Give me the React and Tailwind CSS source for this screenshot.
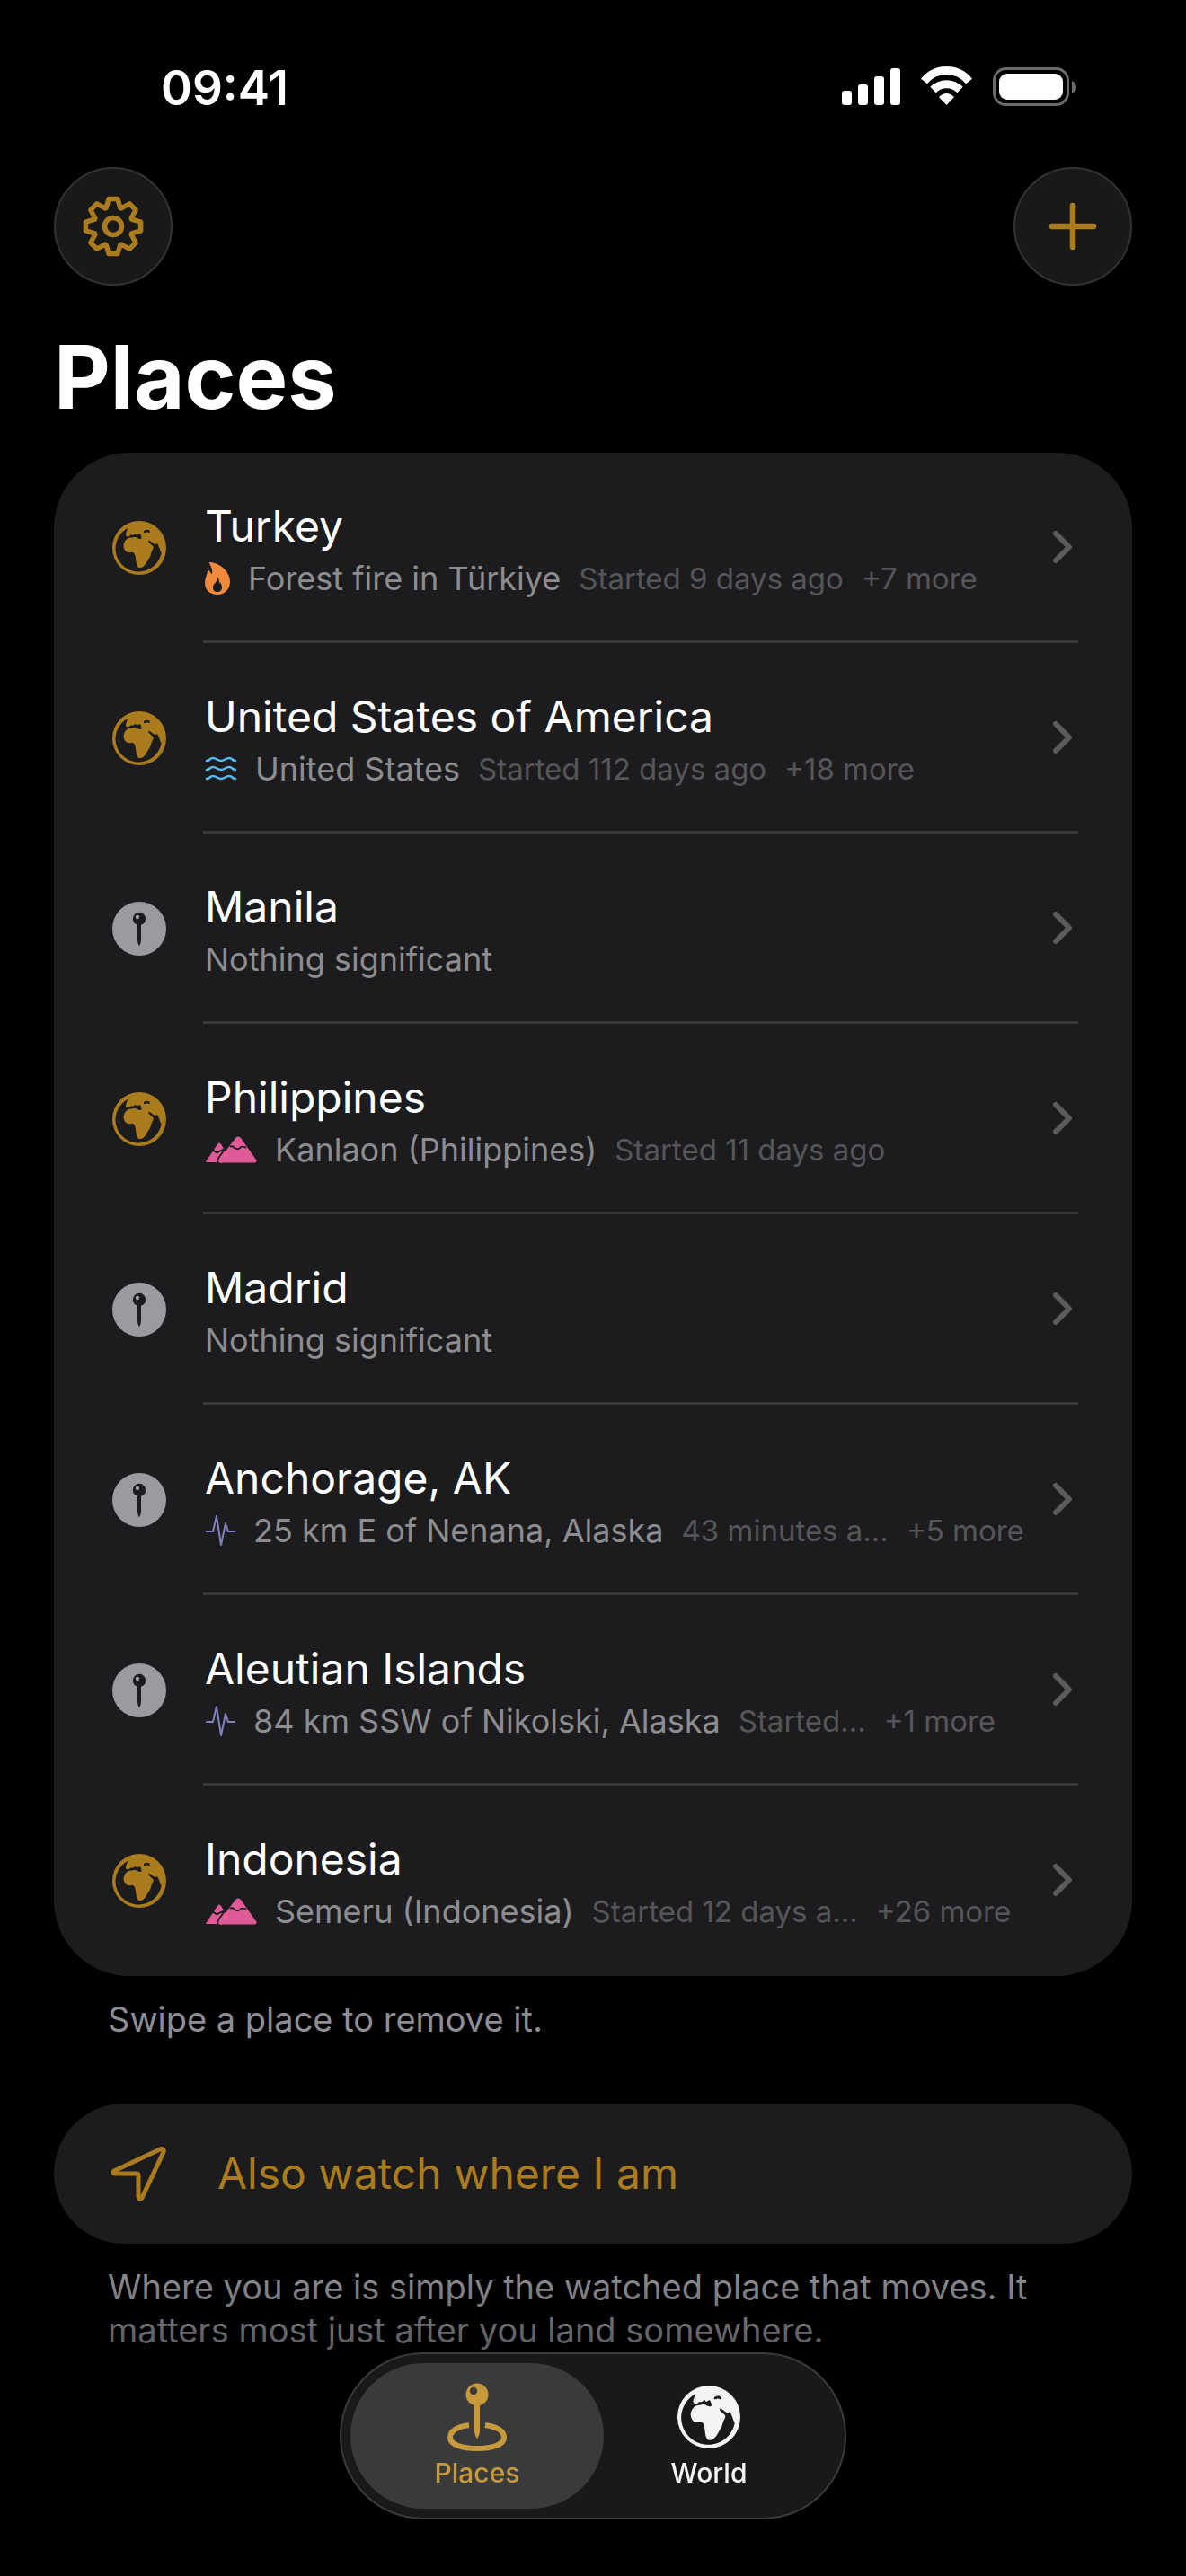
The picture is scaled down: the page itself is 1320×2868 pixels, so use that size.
// src/App.jsx
const PLACES = [
  { name: "Turkey", kind: "country", event: "fire", title: "Forest fire in Türkiye", when: "Started 9 days ago", more: "+7 more" },
  { name: "United States of America", kind: "country", event: "flood", title: "United States", when: "Started 112 days ago", more: "+18 more" },
  { name: "Manila", kind: "city" },
  { name: "Philippines", kind: "country", event: "volcano", title: "Kanlaon (Philippines)", when: "Started 11 days ago" },
  { name: "Madrid", kind: "city" },
  { name: "Anchorage, AK", kind: "city", event: "quake", title: "25 km E of Nenana, Alaska", when: "43 minutes a…", more: "+5 more" },
  { name: "Aleutian Islands", kind: "city", event: "quake", title: "84 km SSW of Nikolski, Alaska", when: "Started…", more: "+1 more" },
  { name: "Indonesia", kind: "country", event: "volcano", title: "Semeru (Indonesia)", when: "Started 12 days a…", more: "+26 more" },
];

// Eight-tooth gear outline around 0,0
function gearPath() {
  const points = [];
  for (let i = 0; i < 8; i++) {
    for (const [radius, offset] of [[22, -21], [31, -9], [31, 9], [22, 21]]) {
      const a = ((i * 45 + offset - 90) * Math.PI) / 180;
      points.push(`${(radius * Math.cos(a)).toFixed(2)} ${(radius * Math.sin(a)).toFixed(2)}`);
    }
  }
  return `M${points.join("L")}Z`;
}

function GearIcon() {
  return (
    <svg className="size-[70px]" viewBox="-35 -35 70 70" fill="none" stroke="currentColor" strokeWidth="5.500" strokeLinejoin="round" aria-hidden="true">
      <path d={gearPath()} />
      <circle r="9.5" />
    </svg>
  );
}

function PlusIcon() {
  return (
    <svg className="size-[54px]" viewBox="0 0 54 54" stroke="currentColor" strokeWidth="6.5" strokeLinecap="round" aria-hidden="true">
      <path d="M27 4V50M4 27H50" />
    </svg>
  );
}

function GlobeIcon({ className }) {
  return (
    <svg className={className} viewBox="0 0 100 100" fill="currentColor" fillRule="evenodd" aria-hidden="true">
      <path
        d="M50 0A50 50 0 1 1 50 100A50 50 0 1 1 50 0Z
        M29 13A43 43 0 1 0 91 60L90 57C88 54 88 50 86 47C85 44 83 41 82 42C81 45 79 44 77 42L70 37C67 35 66 38 68 40L71 43
        C73 46 76 46 76 48C77 51 74 54 73 57C71 62 71 67 67 71C64 77 61 82 57 85C54 87 50 88 47 85C44 80 44 73 43 67C42 62 41 59 37 58
        C32 59 27 59 24 55C21 51 20 45 22 41C24 35 29 31 35 31C41 30 43 29 47 32C50 33 52 34 54 32C55 30 53 27 52 24C50 22 48 25 46 26
        L43 23C41 24 39 27 37 26L34 26C32 29 28 30 26 28C23 25 27 19 29 13Z
        M58 20C59 16 66 15 69 18C71 21 69 23 66 21C63 20 61 22 59 22Z"
      />
    </svg>
  );
}

function CityPinIcon({ className }) {
  return (
    <svg className={className} viewBox="0 0 60 60" aria-hidden="true">
      <circle cx="30" cy="30" r="30" fill="#9a9aa1" />
      <circle cx="30" cy="19" r="7.2" fill="#1c1c1e" />
      <path d="M28 24H32V42Q32 46 30 49.500Q28 46 28 42Z" fill="#1c1c1e" />
      <circle cx="28" cy="17" r="2.200" fill="#9a9aa1" />
    </svg>
  );
}

function EventIcon({ type }) {
  if (type === "fire") {
    return (
      <svg className="w-[28px] h-[36px] shrink-0" viewBox="0 0 28 36" fill="#f08a3c" fillRule="evenodd" aria-hidden="true">
        <path d="M5 1C4 0 5 0 6 0C17 1 28 10 28 22C28 30 22 36 14 36C6 36 0 31 0 23C0 18 2 15 3 10C4 8 5 9 6 11C7 12 7 13 8 13C9 9 7 5 5 1ZM14 17C15 22 9 23 9 28C9 32 11 33 14 33C17 33 19 31 19 28C19 26 18 24 17 22C16 24 16 24 16 24C16 21 16 18 14 17Z" />
      </svg>
    );
  }
  if (type === "flood") {
    return (
      <svg className="w-[36px] h-[28px] shrink-0" viewBox="0 0 36 28" fill="none" stroke="#55b9ee" strokeWidth="2.600" strokeLinecap="round" aria-hidden="true">
        <path d="M2 5C6 5 5 2 9 2S14 5 18 5S23 2 27 2S30 5 34 5M2 15C6 15 5 12 9 12S14 15 18 15S23 12 27 12S30 15 34 15M2 25C6 25 5 22 9 22S14 25 18 25S23 22 27 22S30 25 34 25" />
      </svg>
    );
  }
  if (type === "volcano") {
    return (
      <svg className="w-[58px] h-[30px] shrink-0" viewBox="0 0 58 30" aria-hidden="true">
        <path d="M2 27L14 9Q16 6 18 9L30 29H3Q0 29 2 27Z" fill="#df5b98" />
        <path d="M17 30Q15 28 17 25L34 2Q37 -1 40 2L57 26Q59 29 55 29.500H20Z" fill="#df5b98" />
        <path d="M15 30Q13 27 16 23L24 12M7 17Q9 15 11 17T16 17T22 15M28 12Q30 10 33 13Q37 16 40 12Q44 11 46 13" fill="none" stroke="#1c1c1e" strokeWidth="1.800" />
      </svg>
    );
  }
  return (
    <svg className="w-[34px] h-[34px] shrink-0" viewBox="0 0 34 34" fill="none" stroke="#8380c0" strokeWidth="2" strokeLinecap="round" strokeLinejoin="round" aria-hidden="true">
      <path d="M2 18H9L13 1L18 33L23 9L26 18H33" />
    </svg>
  );
}

function PlaceRow({ place, last }) {
  return (
    <li>
      <button type="button" className="w-full flex items-center gap-9 px-[60px] text-left">
        <span className="w-[70px] shrink-0 flex justify-center">
          {place.kind === "country" ? (
            <GlobeIcon className="size-[60px] text-[#ab7c1e]" />
          ) : (
            <CityPinIcon className="size-[60px]" />
          )}
        </span>
        <span className={`flex-1 min-w-0 h-[212px] flex items-center border-b-3 ${last ? "border-transparent" : "border-[#38383a]"}`}>
          <span className="flex-1 min-w-0 pt-1.5 pl-0.5">
            <span className="block text-[48px] leading-[64px] text-white truncate">{place.name}</span>
            {place.event ? (
              <span className="flex items-center text-[36px] leading-[52px] text-[#8d8d90] whitespace-nowrap">
                <EventIcon type={place.event} />
                <span className="ml-5">{place.title}</span>
                <span className="ml-5 text-[33px] text-[#565659]">{place.when}</span>
                {place.more && <span className="ml-5 text-[33px] text-[#565659]">{place.more}</span>}
              </span>
            ) : (
              <span className="block text-[36px] leading-[52px] text-[#8d8d90]">Nothing significant</span>
            )}
          </span>
          <svg className="w-[28px] h-[38px] shrink-0" viewBox="0 0 28 38" fill="none" stroke="#5b5b5e" strokeWidth="6" strokeLinecap="round" strokeLinejoin="round" aria-hidden="true">
            <path d="M3 4L18 19L3 34" />
          </svg>
        </span>
      </button>
    </li>
  );
}

function StatusBar() {
  return (
    <div className="h-[186px] pt-[66px] pl-[179px] pr-[120px] flex items-start justify-between">
      <span className="text-[53px] leading-[64px] font-semibold">09:41</span>
      <svg className="w-[264px] h-[60px]" viewBox="0 0 264 60" fill="currentColor" aria-hidden="true">
        <rect x="1" y="35" width="11" height="16" rx="3" />
        <rect x="19" y="28" width="11" height="23" rx="3" />
        <rect x="37" y="19" width="11" height="32" rx="3" />
        <rect x="55" y="10" width="11" height="41" rx="3" />
        <g fill="none" stroke="currentColor" strokeWidth="9">
          <path d="M92.500 24.500A32 32 0 0 1 142.500 24.500" />
          <path d="M102.500 34A21 21 0 0 1 132.500 34" />
        </g>
        <path d="M109 42Q117.500 34 126 42L117.500 51Z" />
        <rect x="170.500" y="10.500" width="82" height="40" rx="13" fill="none" stroke="#6b6b6b" strokeWidth="3" />
        <rect x="176" y="16" width="71" height="29" rx="9" />
        <path d="M257 24Q262 26 262 31T257 38Z" fill="#6b6b6b" />
      </svg>
    </div>
  );
}

function RoundButton({ label, children }) {
  return (
    <button
      type="button"
      aria-label={label}
      className="size-[132px] rounded-full bg-[#191919] border-2 border-[#333333] text-[#ab7c1e] flex items-center justify-center"
    >
      {children}
    </button>
  );
}

function TabBar() {
  return (
    <div className="fixed inset-x-0 bottom-0 h-[340px] pb-[63px] flex items-end justify-center bg-gradient-to-b from-transparent via-black/70 to-black pointer-events-none">
      <nav className="flex p-[10px] rounded-full bg-[#191919] border-2 border-[#3a3a3a] text-[30px] leading-[40px] font-medium pointer-events-auto">
        <a href="#places" aria-current="page" className="w-[282px] h-[162px] pt-[18px] rounded-full bg-[#3a3a3a] text-[#c79a3b] flex flex-col items-center">
          <svg className="w-[70px] h-[84px]" viewBox="0 0 70 84" fill="none" aria-hidden="true">
            <path d="M26 51Q5 54 5 65C5 73 19 77 35 77S65 73 65 65Q65 54 44 51" stroke="currentColor" strokeWidth="6" />
            <path d="M32 28H38V58Q38 62 35 66.500Q32 62 32 58Z" fill="currentColor" />
            <circle cx="35" cy="17" r="12.500" fill="currentColor" />
            <circle cx="31" cy="13" r="4.200" fill="#3a3a3a" />
          </svg>
          <span>Places</span>
        </a>
        <a href="#world" className="w-[282px] h-[162px] -ml-6 pt-[18px] rounded-full text-[#f4f4f4] flex flex-col items-center">
          <span className="h-[84px] flex items-center">
            <GlobeIcon className="size-[70px]" />
          </span>
          <span>World</span>
        </a>
      </nav>
    </div>
  );
}

export default function App() {
  return (
    <div className="min-h-screen bg-black text-white font-['Inter',sans-serif]">
      <StatusBar />

      <header className="px-[60px]">
        <div className="flex justify-between">
          <RoundButton label="Settings">
            <GearIcon />
          </RoundButton>
          <RoundButton label="Add place">
            <PlusIcon />
          </RoundButton>
        </div>
        <h1 className="mt-[42px] text-[97px] leading-[120px] font-bold">Places</h1>
      </header>

      <main className="px-[60px] pt-6">
        <ul className="rounded-[84px] bg-[#1c1c1e]">
          {PLACES.map((place, i) => (
            <PlaceRow key={place.name} place={place} last={i === PLACES.length - 1} />
          ))}
        </ul>
        <p className="mt-6 px-[60px] text-[38px] leading-[48px] text-[#8d8d93]">Swipe a place to remove it.</p>

        <button
          type="button"
          className="mt-[70px] w-full h-[156px] px-[60px] rounded-full bg-[#1c1c1e] text-[#ab7c1e] flex items-center gap-[52px] text-[48px]"
        >
          <svg className="w-[70px] h-[64px]" viewBox="0 0 70 64" fill="none" stroke="currentColor" strokeWidth="5" strokeLinejoin="round" aria-hidden="true">
            <path d="M7 29L59 4.500Q63 4 62 8L38 59Q35 62 34 58V34Q34 32 32 32H8Q4 31 7 29Z" />
          </svg>
          Also watch where I am
        </button>
        <p className="mt-6 px-[60px] text-[38px] leading-[48px] text-[#8d8d93]">
          Where you are is simply the watched place that moves. It matters most just after you land somewhere.
        </p>
      </main>

      <TabBar />
    </div>
  );
}
